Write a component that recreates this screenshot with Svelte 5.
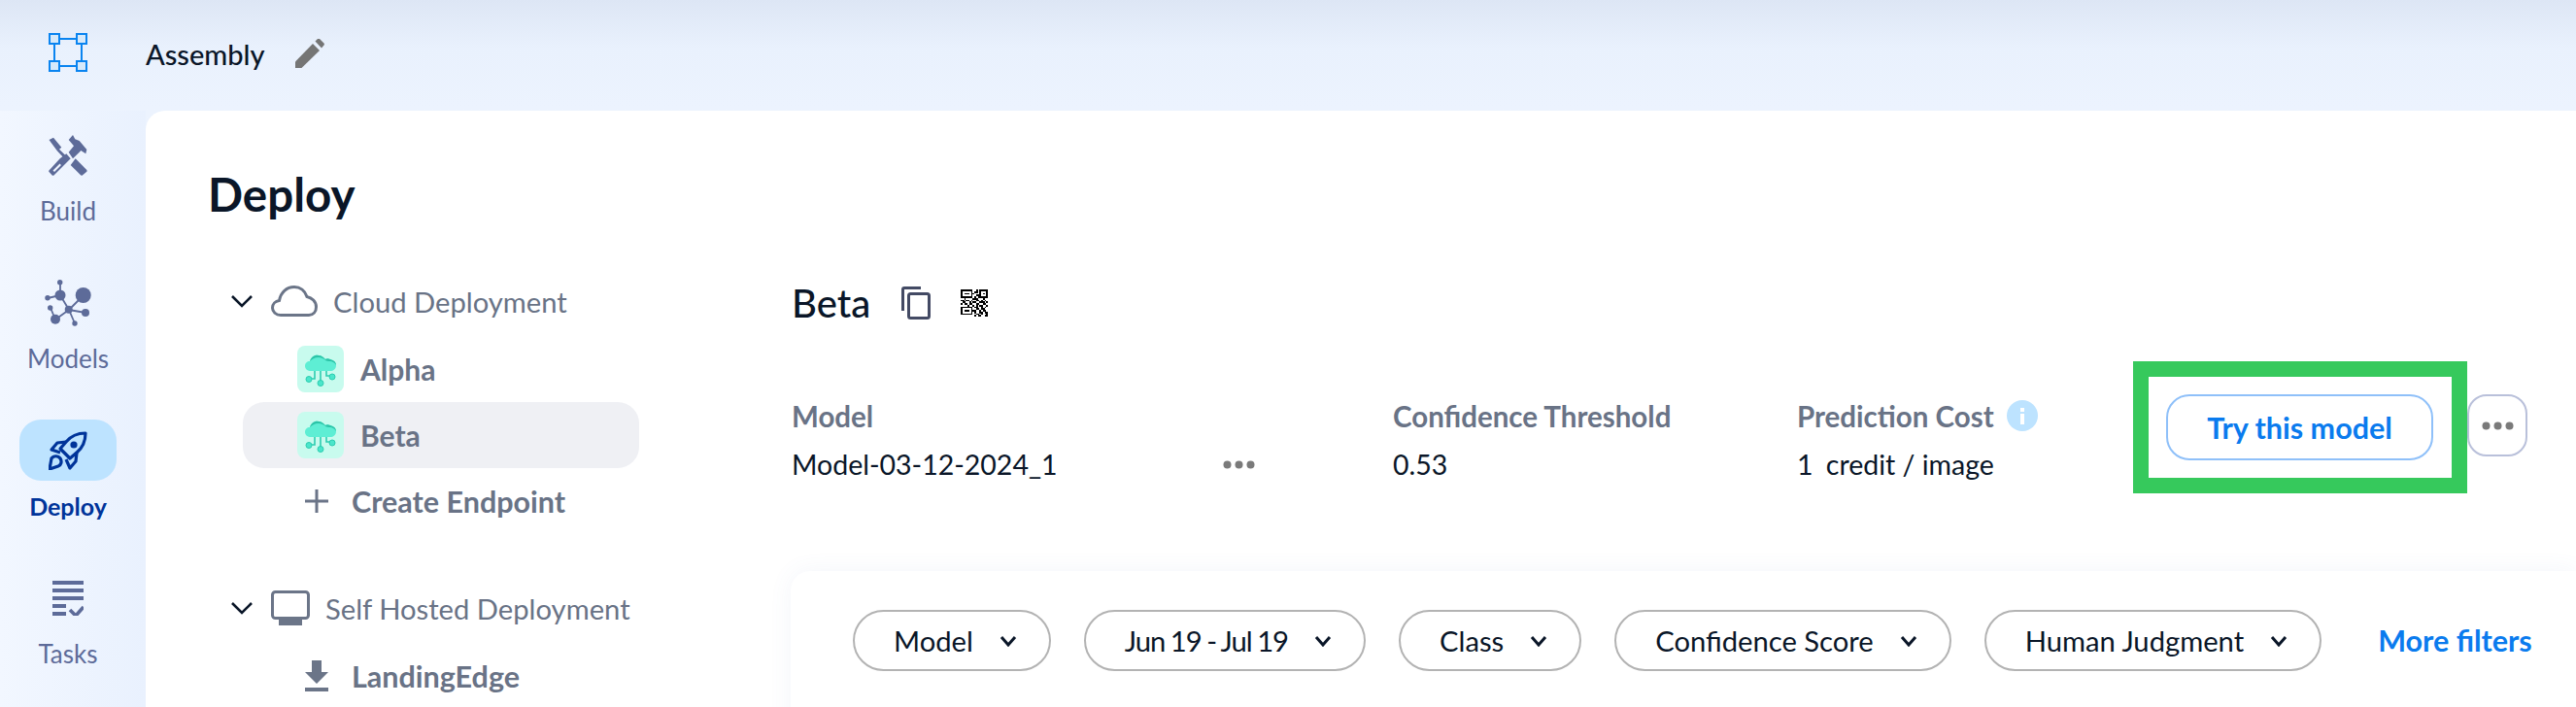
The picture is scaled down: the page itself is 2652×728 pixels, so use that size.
<script>
  const nav = [
    { id: 'build', label: 'Build' },
    { id: 'models', label: 'Models' },
    { id: 'deploy', label: 'Deploy', active: true },
    { id: 'tasks', label: 'Tasks' }
  ];
  const filters = ['Model', 'Jun 19 - Jul 19', 'Class', 'Confidence Score', 'Human Judgment'];

  // qr code pattern, one string per row
  const qr = [
    '1111111001011111',
    '1000001011010001',
    '1011101100010101',
    '1000001001110001',
    '1111111010111111',
    '0010000111000100',
    '1101101001101010',
    '0110010110011101',
    '1011011001100110',
    '0000100101011001',
    '1111111011001010',
    '1000001001101100',
    '1011101110010110',
    '1000001010011011',
    '1111111001101001',
    '0000000010110011'
  ];
  const qrCells = qr.flatMap((row, y) =>
    [...row].map((c, x) => (c === '1' ? { x, y } : null)).filter(Boolean)
  );
</script>

{#snippet chevron()}
  <svg class="chev" width="24" height="16" viewBox="0 0 24 16"><path d="M2 3l10 10L22 3" fill="none" stroke="#0a1628" stroke-width="2.6"/></svg>
{/snippet}

{#snippet endpointIcon()}
  <span class="ep-icon">
    <svg width="48" height="48" viewBox="0 0 48 48">
      <g fill="none" stroke="#2ccdb0" stroke-width="1.6">
        <path d="M18 25v9h-6M24 25v14M30 25v6h6"/>
      </g>
      <path d="M8 21c0-3 2-5 5-5 1-4 5-7 9-6 3 0 5 2 7 4 1-1 3-1 5 0 4 1 6 3 6 6 0 4-3 6-6 6H14c-3 0-6-2-6-5z" fill="#5eeed4"/>
      <path d="M13 16c1-4 5-7 9-6 3 0 5 2 7 4 1-1 3-1 5 0 4 1 6 3 6 6-2-3-4-4-6-4-2 0-4 0-6-2-2-1-3-2-6-2-4 0-7 2-9 4z" fill="#2cc4a8"/>
      <g fill="#4be6cb" stroke="#2ccdb0" stroke-width="1">
        <circle cx="12" cy="34.500" r="3"/>
        <circle cx="24" cy="38.500" r="3"/>
        <circle cx="36" cy="32" r="3"/>
      </g>
    </svg>
  </span>
{/snippet}

{#snippet dots()}
  <svg width="33" height="9" viewBox="0 0 33 9" fill="#7a7a7a"><circle cx="4.500" cy="4.500" r="4"/><circle cx="16.500" cy="4.500" r="4"/><circle cx="28.500" cy="4.500" r="4"/></svg>
{/snippet}

<div class="app">
  <div class="logo">
    <svg width="40" height="40" viewBox="0 0 40 40">
      <path d="M6 6h28v28H6z" fill="none" stroke="#0a84f0" stroke-width="2"/>
      <g fill="#d6e9fa" stroke="#0a84f0" stroke-width="2">
        <rect x="1" y="1" width="10" height="10"/>
        <rect x="29" y="1" width="10" height="10"/>
        <rect x="1" y="29" width="10" height="10"/>
        <rect x="29" y="29" width="10" height="10"/>
      </g>
    </svg>
  </div>

  <header class="topbar">
    <span class="project">Assembly</span>
    <svg width="30" height="30" viewBox="0 0 30 30" fill="#757575">
      <path d="M0 30v-6.500L18 5l7 7L6.500 30z"/>
      <path d="M20.500 2.500L23 0q1-.800 2 0l4.500 4.500q.800 1 0 2L27 9.500z"/>
    </svg>
  </header>

  <nav class="sidebar">
    {#each nav as item}
      <div class="nav-item" class:active={item.active}>
        <div class="nav-icon">
          {#if item.id === 'build'}
            <svg width="40" height="42" viewBox="0 0 40 42" fill="#5d6b99">
              <path d="M.5 5L5 2.700l8.300 10-2.300 2L19.500 23 17.500 25.500 9 16.500z"/>
              <path d="M22.700 31l5-6.700L39.300 36q.7 1 0 1.700l-4.500 3.700q-1 .6-1.800-.1z"/>
              <path d="M.5 36.500l11.200-12.200 6.600-5L22.700 24.300 5.500 41.500q-1 .6-1.800 0L.5 38q-.6-.8 0-1.500zM4.500 36.500l1.500 1.500 7-7-1.500-1.500z" fill-rule="evenodd"/>
              <path d="M20.700 5L25 0l2.300 4.300 4.400 1.700 7.600 9-1 4.300-5-3.300-1.600 1.700-6.700 6.600-4.300-6.600 5.300-6.400z"/>
            </svg>
          {:else if item.id === 'models'}
            <svg width="48" height="48" viewBox="0 0 48 48" fill="#5d6b99">
              <g stroke="#5d6b99" stroke-width="1.800" fill="none">
                <path d="M16 3v13M3 19l13-3M16 16l9 15M40 16L25 31M42 34L25 31M11 41l14-10M6 29l5 12M25 31l6 14"/>
              </g>
              <circle cx="39.700" cy="16" r="8"/>
              <circle cx="16" cy="16" r="5.500"/>
              <circle cx="15.700" cy="2.700" r="2.700"/>
              <circle cx="3" cy="18.700" r="2.700"/>
              <circle cx="24.700" cy="30.700" r="4"/>
              <circle cx="42" cy="34" r="4"/>
              <circle cx="11" cy="40.700" r="5"/>
              <circle cx="5.700" cy="29" r="2.700"/>
              <circle cx="31" cy="45" r="2.700"/>
            </svg>
          {:else if item.id === 'deploy'}
            <svg width="40" height="40" viewBox="0 0 40 40" fill="none" stroke="#00349a" stroke-width="3.200" stroke-linejoin="round">
              <path d="M38 2c-8 0-15 3-20 9l-6 7 10 10 7-6c6-5 9-12 9-20z"/>
              <path d="M18 11l-9 1-6 7 9 3"/>
              <path d="M29 22l-1 9-6 7-4-9"/>
              <path d="M1 39l2-11c2-3 7-3 9 0 2 3 1 7-2 8z"/>
              <circle cx="26" cy="14" r="3.600" fill="#00349a" stroke="none"/>
            </svg>
          {:else}
            <svg width="32" height="36" viewBox="0 0 32 36" fill="#5d6b99">
              <rect width="32" height="4"/>
              <rect y="8" width="32" height="4"/>
              <rect y="16" width="32" height="4"/>
              <rect y="24" width="14" height="4"/>
              <rect y="32" width="14" height="4"/>
              <path d="M18 30l6 6 8-9" fill="none" stroke="#5d6b99" stroke-width="3.600"/>
            </svg>
          {/if}
        </div>
        <span class="nav-label">{item.label}</span>
      </div>
    {/each}
  </nav>

  <main class="card">
    <h1>Deploy</h1>
    <div class="body">
      <div class="tree">
        <div class="group-head">
          {@render chevron()}
          <svg width="48" height="32" viewBox="0 0 48 32"><path d="M10 30.500C5 30.500 1.500 27 1.500 23c0-4 3-7 7-7.500C10 7 16 1.500 24 1.500c6 0 11 4 13 10 5 1 9.500 5 9.500 10.500 0 5-3 8.500-7.500 8.500z" fill="none" stroke="#6b7588" stroke-width="3"/></svg>
          <span>Cloud Deployment</span>
        </div>
        <div class="row">{@render endpointIcon()}<span>Alpha</span></div>
        <div class="row selected">{@render endpointIcon()}<span>Beta</span></div>
        <div class="row action">
          <svg width="24" height="24" viewBox="0 0 24 24"><path d="M12 0v24M0 12h24" stroke="#6b7588" stroke-width="3"/></svg>
          <span>Create Endpoint</span>
        </div>

        <div class="group-head second">
          {@render chevron()}
          <svg width="40" height="36" viewBox="0 0 40 36" fill="#6b7588">
            <rect x="1.500" y="1.500" width="37" height="27" rx="3" fill="none" stroke="#6b7588" stroke-width="3"/>
            <rect x="8" y="30" width="24" height="6"/>
          </svg>
          <span>Self Hosted Deployment</span>
        </div>
        <div class="row action">
          <svg width="24" height="32" viewBox="0 0 24 32" fill="#6b7588">
            <path d="M7 0h10v12h7L12 24 0 12h7z"/>
            <rect y="28" width="24" height="4"/>
          </svg>
          <span>LandingEdge</span>
        </div>
      </div>

      <section class="detail">
        <div class="title-row">
          <h2>Beta</h2>
          <svg class="copy" width="30" height="34" viewBox="0 0 30 34" fill="none" stroke="#434a64" stroke-width="3">
            <path d="M1.500 25V3q0-1.500 1.500-1.500h17"/>
            <rect x="7.500" y="7.500" width="21" height="25" rx="2"/>
          </svg>
          <svg width="28" height="28" viewBox="0 0 16 16" fill="#000" shape-rendering="crispEdges">
            {#each qrCells as c}
              <rect x={c.x} y={c.y} width="1" height="1"/>
            {/each}
          </svg>
        </div>

        <div class="info">
          <div class="col model">
            <div class="label">Model</div>
            <div class="value">
              <span>Model-03-12-2024_1</span>
              {@render dots()}
            </div>
          </div>
          <div class="col conf">
            <div class="label">Confidence Threshold</div>
            <div class="value">0.53</div>
          </div>
          <div class="col cost">
            <div class="label">
              Prediction Cost
              <svg width="32" height="32" viewBox="0 0 32 32"><circle cx="16" cy="16" r="16" fill="#bde3ff"/><rect x="14" y="14" width="4" height="11" fill="#fff"/><rect x="14" y="8" width="4" height="4" fill="#fff"/></svg>
            </div>
            <div class="value"><span class="num">1</span> credit / image</div>
          </div>
          <div class="highlight">
            <button class="try" type="button">Try this model</button>
          </div>
          <button class="more" type="button">{@render dots()}</button>
        </div>

        <div class="filters">
          {#each filters as f}
            <div class="chip">
              <span class:tight={f.startsWith('Jun')}>{f}</span>
              <svg width="18" height="12" viewBox="0 0 18 12"><path d="M2 2l7 8 7-8" fill="none" stroke="#0a1628" stroke-width="3"/></svg>
            </div>
          {/each}
          <span class="more-filters">More filters</span>
        </div>
      </section>
    </div>
  </main>
</div>

<style>
  :global(body) {
    margin: 0;
    overflow: hidden;
  }

  .app {
    display: grid;
    grid-template-columns: 150px 1fr;
    grid-template-rows: 114px 1fr;
    width: 2652px;
    height: 728px;
    overflow: hidden;
    font-family: Lato, "Liberation Sans", sans-serif;
    color: #0a1628;
    background: linear-gradient(180deg, #dde6f5 0, #e9f1fd 50px, #ecf3fe 110px, #eef5ff 100%);
  }

  .logo {
    display: flex;
    justify-content: center;
    padding: 34px 10px 0 0;
  }

  .topbar {
    display: flex;
    align-items: center;
    gap: 31px;
    padding-bottom: 4px;
    height: 110px;
  }

  .project {
    font-size: 29px;
    font-weight: 500;
  }

  .sidebar {
    display: flex;
    flex-direction: column;
    align-items: center;
    gap: 46px;
    padding: 14px 10px 0 0;
    background: linear-gradient(90deg, #f2f7ff, #e9f1fe);
  }

  .nav-item {
    display: flex;
    flex-direction: column;
    align-items: center;
    height: 106px;
  }

  .nav-icon {
    display: flex;
    align-items: center;
    justify-content: center;
    width: 100px;
    height: 64px;
    border-radius: 22px;
  }

  .active .nav-icon {
    background: #bde3ff;
  }

  .nav-label {
    margin-top: 9px;
    line-height: 34px;
    font-size: 26px;
    color: #5d6b99;
  }

  .active .nav-label {
    color: #00349a;
    font-weight: 700;
    font-size: 25px;
  }

  .card {
    background: #fff;
    border-top-left-radius: 20px;
    padding: 57px 0 0 66px;
  }

  h1 {
    margin: 0 0 0 -2px;
    font-size: 47.500px;
    line-height: 58px;
    font-weight: 700;
  }

  .body {
    display: grid;
    grid-template-columns: 599px 1fr;
    margin-top: 61px;
  }

  .tree {
    padding-left: 21px;
    color: #697386;
    font-size: 29.200px;
  }

  .group-head {
    display: flex;
    align-items: center;
    height: 40px;
    margin-bottom: 16px;
  }

  .group-head.second {
    margin-top: 56px;
  }

  .chev {
    margin-right: 18px;
  }

  .group-head svg:not(.chev) {
    margin-right: 16px;
  }

  .row {
    display: flex;
    align-items: center;
    gap: 17px;
    width: 408px;
    height: 68px;
    margin-left: 13px;
    padding-left: 56px;
    box-sizing: border-box;
    border-radius: 22px;
    font-size: 30px;
    font-weight: 700;
  }

  .row.selected {
    background: #eff0f4;
  }

  .row.action {
    padding-left: 64px;
    gap: 24px;
    font-size: 30.500px;
  }

  .ep-icon {
    display: flex;
    width: 48px;
    height: 48px;
    border-radius: 8px;
    background: #c8fbee;
  }

  .detail {
    padding-top: 2px;
  }

  .title-row {
    display: flex;
    align-items: center;
    height: 40px;
  }

  h2 {
    margin: 0 33px 0 0;
    width: 80px;
    font-size: 40px;
    font-weight: 500;
  }

  .copy {
    margin-right: 31px;
  }

  .info {
    display: flex;
    margin-top: 40px;
  }

  .col {
    padding-top: 38px;
    box-sizing: border-box;
  }

  .model { width: 619px; }
  .conf { width: 416px; }
  .cost { width: 346px; }

  .label {
    display: flex;
    align-items: center;
    gap: 13px;
    height: 36px;
    font-size: 29.500px;
    font-weight: 700;
    color: #697386;
  }

  .value {
    margin-top: 14px;
    line-height: 36px;
    font-size: 28.500px;
  }

  .model .value {
    display: flex;
    align-items: center;
    justify-content: space-between;
    width: 477px;
  }

  .num {
    margin-right: 6px;
  }

  .highlight {
    box-sizing: border-box;
    width: 344px;
    height: 136px;
    padding: 18px;
    border: 16px solid #36c95c;
  }

  .try {
    display: block;
    width: 275px;
    height: 68px;
    border: 2px solid #8fc0f9;
    border-radius: 24px;
    background: #fff;
    color: #0a7bee;
    font: 700 30.500px Lato, "Liberation Sans", sans-serif;
  }

  .more {
    display: flex;
    align-items: center;
    justify-content: center;
    box-sizing: border-box;
    width: 62px;
    height: 64px;
    margin-top: 34px;
    padding: 0;
    border: 2px solid #b9c0da;
    border-radius: 20px;
    background: #fff;
  }

  .filters {
    display: flex;
    align-items: flex-start;
    gap: 34px;
    height: 200px;
    margin: 80px 0 0 -1px;
    padding: 40px 0 0 64px;
    box-sizing: border-box;
    border-top-left-radius: 20px;
    box-shadow: 0 0 24px rgba(80, 110, 190, 0.07);
  }

  .chip {
    display: flex;
    align-items: center;
    gap: 27px;
    box-sizing: border-box;
    height: 63px;
    padding: 0 33px 0 40px;
    border: 2px solid #b3b3b3;
    border-radius: 32px;
    font-size: 29.200px;
    white-space: nowrap;
  }

  .tight {
    letter-spacing: -1px;
    word-spacing: -1px;
  }

  .more-filters {
    margin-left: 24px;
    line-height: 63px;
    font-size: 30.500px;
    font-weight: 700;
    color: #0a7bee;
  }
</style>
